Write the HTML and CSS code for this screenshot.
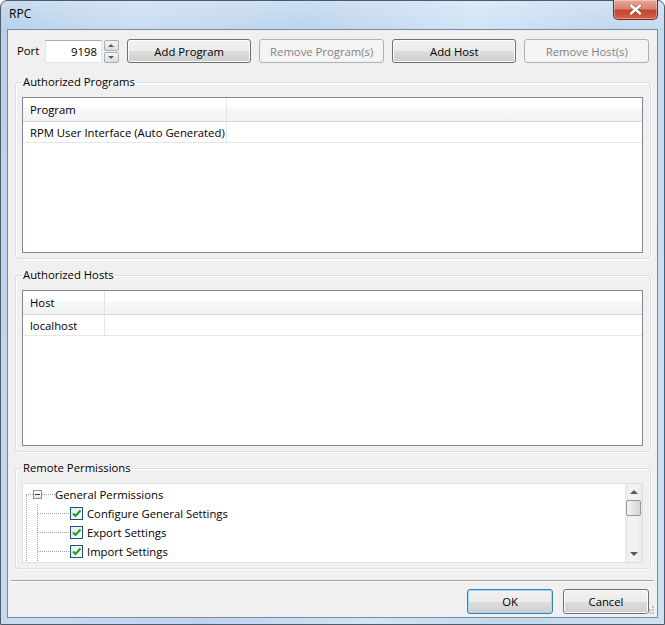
FILE: index.html
```html
<!DOCTYPE html>
<html lang="en">
  <head>
    <meta charset="UTF-8" />
    <title>RPC</title>
    <link rel="stylesheet" href="styles.css">
  </head>
  <body>
    <div class="janela">
      <div class="titulo">
        <span class="titulo-texto">RPC</span>
        <button class="fechar" title="Close">
          <svg width="13" height="11" viewBox="0 0 13 11">
            <path d="M2 1.5 L11 9.5 M11 1.5 L2 9.5" stroke="#5a1a10" stroke-width="4" stroke-linecap="round" opacity="0.35" />
            <path d="M2 1.5 L11 9.5 M11 1.5 L2 9.5" stroke="#fff" stroke-width="2.4" stroke-linecap="round" />
          </svg>
        </button>
      </div>

      <div class="cliente">
        <!-- linha de cima -->
        <div class="barra">
          <label class="rotulo" for="porta">Port</label>
          <input class="porta" id="porta" type="text" value="9198" />
          <div class="spin">
            <span class="spin-btn"><i class="seta-cima"></i></span>
            <span class="spin-btn"><i class="seta-baixo"></i></span>
          </div>
          <button class="btn">Add Program</button>
          <button class="btn" disabled>Remove Program(s)</button>
          <button class="btn">Add Host</button>
          <button class="btn" disabled>Remove Host(s)</button>
        </div>

        <fieldset class="grupo">
          <legend>Authorized Programs</legend>
          <div class="lista">
            <div class="lista-cab">
              <div class="col col-prog">Program</div>
              <div class="col col-resto"></div>
            </div>
            <div class="lista-linha">
              <div class="col col-prog">RPM User Interface (Auto Generated)</div>
              <div class="col col-resto"></div>
            </div>
          </div>
        </fieldset>

        <fieldset class="grupo">
          <legend>Authorized Hosts</legend>
          <div class="lista">
            <div class="lista-cab">
              <div class="col col-host">Host</div>
              <div class="col col-resto"></div>
            </div>
            <div class="lista-linha">
              <div class="col col-host">localhost</div>
              <div class="col col-resto"></div>
            </div>
          </div>
        </fieldset>

        <fieldset class="grupo grupo-perm">
          <legend>Remote Permissions</legend>
          <div class="arvore">
            <div class="arvore-conteudo">
              <div class="no-raiz">
                <div class="no">
                  <span class="ramo ramo-raiz"></span>
                  <span class="expandir"><i></i></span>
                  <span class="ramo ramo-txt"></span>
                  <span>General Permissions</span>
                </div>
                <div class="filhos">
                  <div class="folha">
                    <span class="ramo ramo-filho"></span>
                    <span class="check"><svg width="11" height="11" viewBox="0 0 11 11"><path d="M2 5.5 L4.5 8 L9.5 2.5" fill="none" stroke="#21a121" stroke-width="2.2" /></svg></span>
                    <span>Configure General Settings</span>
                  </div>
                  <div class="folha">
                    <span class="ramo ramo-filho"></span>
                    <span class="check"><svg width="11" height="11" viewBox="0 0 11 11"><path d="M2 5.5 L4.5 8 L9.5 2.5" fill="none" stroke="#21a121" stroke-width="2.2" /></svg></span>
                    <span>Export Settings</span>
                  </div>
                  <div class="folha">
                    <span class="ramo ramo-filho"></span>
                    <span class="check"><svg width="11" height="11" viewBox="0 0 11 11"><path d="M2 5.5 L4.5 8 L9.5 2.5" fill="none" stroke="#21a121" stroke-width="2.2" /></svg></span>
                    <span>Import Settings</span>
                  </div>
                </div>
              </div>
            </div>
            <div class="rolagem">
              <span class="rol-seta"><i class="tri-cima"></i></span>
              <span class="rol-polegar"></span>
              <span class="rol-trilho"></span>
              <span class="rol-seta"><i class="tri-baixo"></i></span>
            </div>
          </div>
        </fieldset>

        <div class="rodape">
          <button class="btn btn-ok">OK</button>
          <button class="btn btn-cancel">Cancel</button>
        </div>

        <svg class="pegador" width="9" height="9" viewBox="0 0 9 9">
          <rect x="6" y="0" width="2" height="2" fill="#c2c6cc" />
          <rect x="3" y="3" width="2" height="2" fill="#c2c6cc" />
          <rect x="6" y="3" width="2" height="2" fill="#c2c6cc" />
          <rect x="0" y="6" width="2" height="2" fill="#c2c6cc" />
          <rect x="3" y="6" width="2" height="2" fill="#c2c6cc" />
          <rect x="6" y="6" width="2" height="2" fill="#c2c6cc" />
        </svg>
      </div>
    </div>
  </body>
</html>
```

FILE: styles.css
```css
body {
  margin: 0;
  font-family: "Open Sans", "Noto Sans", sans-serif;
  font-size: 11.3px;
  color: #000;
  background: #fff;
}

button,
input {
  font-family: inherit;
  font-size: inherit;
}

.janela {
  width: 665px;
  height: 625px;
  box-sizing: border-box;
  display: flex;
  flex-direction: column;
  padding: 0 6px 6px 6px;
  border: 1px solid #4f5b68;
  border-radius: 7px 7px 0 0;
  background: linear-gradient(180deg, rgba(255, 255, 255, 0.25), rgba(255, 255, 255, 0) 28px),
    linear-gradient(100deg, #b7d0ea 0%, #c9ddf2 18%, #bcd4ed 40%, #d2e4f6 62%, #c1d8ef 80%, #cfe2f4 100%);
}

/* barra de titulo */
.titulo {
  height: 28px;
  display: flex;
  align-items: flex-start;
}

.titulo-texto {
  margin: 5px 0 0 2px;
  font-size: 12px;
  line-height: 16px;
}

.fechar {
  margin-left: auto;
  margin-top: -1px;
  width: 45px;
  height: 20px;
  padding: 0;
  display: flex;
  align-items: center;
  justify-content: center;
  border: 1px solid #6f2b22;
  border-top: none;
  border-radius: 0 0 5px 5px;
  background: linear-gradient(180deg, #e8a99a 0%, #d9826f 45%, #c4452f 55%, #d0624a 100%);
  box-shadow: inset 0 0 0 1px rgba(255, 255, 255, 0.35);
}

/* area cliente */
.cliente {
  position: relative;
  flex: 1;
  display: flex;
  flex-direction: column;
  background: #f0f0f0;
  border: 1px solid #7a8a9c;
}

.barra {
  display: flex;
  align-items: center;
  height: 24px;
  margin-top: 9px;
  padding-left: 9px;
}

.rotulo {
  width: 28px;
  line-height: 16px;
}

.porta {
  width: 57px;
  height: 23px;
  box-sizing: border-box;
  padding: 0 4px;
  text-align: right;
  border: 1px solid #e3e3e3;
  border-top-color: #abadb3;
  background: #fff;
  outline: none;
}

.spin {
  display: flex;
  flex-direction: column;
  gap: 1px;
  margin-left: 2px;
  margin-right: 8px;
}

.spin-btn {
  width: 15px;
  height: 11px;
  box-sizing: border-box;
  display: flex;
  align-items: center;
  justify-content: center;
  border: 1px solid #a9aeb4;
  border-radius: 2px;
  background: linear-gradient(180deg, #f4f4f4, #dedede);
}

.seta-cima,
.seta-baixo {
  width: 0;
  height: 0;
  border-left: 3px solid transparent;
  border-right: 3px solid transparent;
}

.seta-cima {
  border-bottom: 3px solid #4b5f7c;
}

.seta-baixo {
  border-top: 3px solid #4b5f7c;
}

.btn {
  width: 125px;
  height: 24px;
  margin-right: 8px;
  padding: 0;
  color: #000;
  border: 1px solid #707070;
  border-radius: 3px;
  background: linear-gradient(180deg, #f2f2f2 0%, #ebebeb 50%, #dddddd 51%, #cfcfcf 100%);
  box-shadow: inset 0 0 0 1px #fcfcfc;
}

.btn:disabled {
  color: #838383;
  border-color: #adb2b5;
  background: #f4f4f4;
  box-shadow: none;
}

/* grupos */
.grupo {
  min-width: 0;
  margin: 11px 6px 0 7px;
  padding: 7px 7px 5px 6px;
  border: 1px solid #d5dfe5;
  border-radius: 3px;
  box-shadow: inset 1px 1px 0 #fff, 1px 1px 0 #fff;
}

.grupo + .grupo {
  margin-top: 8px;
}

.grupo legend {
  padding: 0 1px;
  line-height: 16px;
}

.lista {
  height: 156px;
  box-sizing: border-box;
  border: 1px solid #828790;
  background: #fff;
}

.lista-cab,
.lista-linha {
  display: flex;
  box-sizing: border-box;
}

.lista-cab {
  height: 24px;
  border-bottom: 1px solid #d5d5d5;
  background: linear-gradient(180deg, #ffffff 0%, #ffffff 42%, #f7f8fa 43%, #f1f2f4 100%);
}

.lista-linha {
  height: 21px;
  border-bottom: 1px solid #e6e6e6;
}

.col {
  box-sizing: border-box;
  padding-left: 7px;
  display: flex;
  align-items: center;
  white-space: nowrap;
}

.col-prog {
  width: 204px;
  border-right: 1px solid #e3e5e8;
}

.col-host {
  width: 82px;
  border-right: 1px solid #e3e5e8;
}

.col-resto {
  flex: 1;
}

/* arvore de permissoes */
.arvore {
  height: 80px;
  box-sizing: border-box;
  display: flex;
  border: 1px solid #dcdfe3;
  background: #fff;
  overflow: hidden;
}

.arvore-conteudo {
  flex: 1;
  padding-top: 1px;
}

.no-raiz {
  position: relative;
}

.no-raiz::before {
  content: "";
  position: absolute;
  left: 3px;
  top: 10px;
  bottom: -20px;
  border-left: 1px dotted #a0a0a0;
}

.no,
.folha {
  height: 19px;
  display: flex;
  align-items: center;
}

.ramo {
  height: 0;
  border-top: 1px dotted #a0a0a0;
}

.ramo-raiz {
  width: 7px;
  margin-left: 3px;
}

.ramo-txt {
  width: 13px;
}

.ramo-filho {
  width: 31px;
  margin-right: 1px;
}

.expandir {
  width: 9px;
  height: 9px;
  box-sizing: border-box;
  display: flex;
  align-items: center;
  justify-content: center;
  border: 1px solid #919191;
  background: linear-gradient(180deg, #fff, #e4e4e4);
}

.expandir i {
  width: 5px;
  height: 1px;
  background: #2b3c5a;
}

.filhos {
  margin-left: 14px;
  border-left: 1px dotted #a0a0a0;
}

.check {
  width: 13px;
  height: 13px;
  box-sizing: border-box;
  margin-right: 4px;
  display: flex;
  align-items: center;
  justify-content: center;
  border: 1px solid #1c4f7d;
  background: linear-gradient(135deg, #eaeaea, #ffffff);
}

.rolagem {
  width: 17px;
  display: flex;
  flex-direction: column;
  align-items: center;
  background: linear-gradient(90deg, #e8e8e8, #f2f2f2 30%, #f2f2f2 70%, #e8e8e8);
}

.rol-seta {
  height: 16px;
  display: flex;
  align-items: center;
  justify-content: center;
}

.tri-cima,
.tri-baixo {
  width: 0;
  height: 0;
  border-left: 4px solid transparent;
  border-right: 4px solid transparent;
}

.tri-cima {
  border-bottom: 4px solid #5a5a5a;
}

.tri-baixo {
  border-top: 4px solid #5a5a5a;
}

.rol-polegar {
  width: 15px;
  height: 16px;
  box-sizing: border-box;
  border: 1px solid #979797;
  border-radius: 2px;
  background: linear-gradient(90deg, #f3f3f3, #e4e4e4 50%, #d6d6d6);
}

.rol-trilho {
  flex: 1;
}

/* rodape */
.rodape {
  display: flex;
  justify-content: flex-end;
  gap: 10px;
  margin: 11px 3px 0 3px;
  padding: 8px 5px 3px 0;
  border-top: 1px solid #a0a0a0;
  box-shadow: inset 0 1px 0 #fff;
}

.rodape .btn {
  width: 86px;
  height: 25px;
  margin: 0;
}

.btn-ok {
  border-color: #3c7fb1;
  box-shadow: inset 0 0 0 1px #9ed8f8;
}

.pegador {
  position: absolute;
  right: 2px;
  bottom: 2px;
}
```
